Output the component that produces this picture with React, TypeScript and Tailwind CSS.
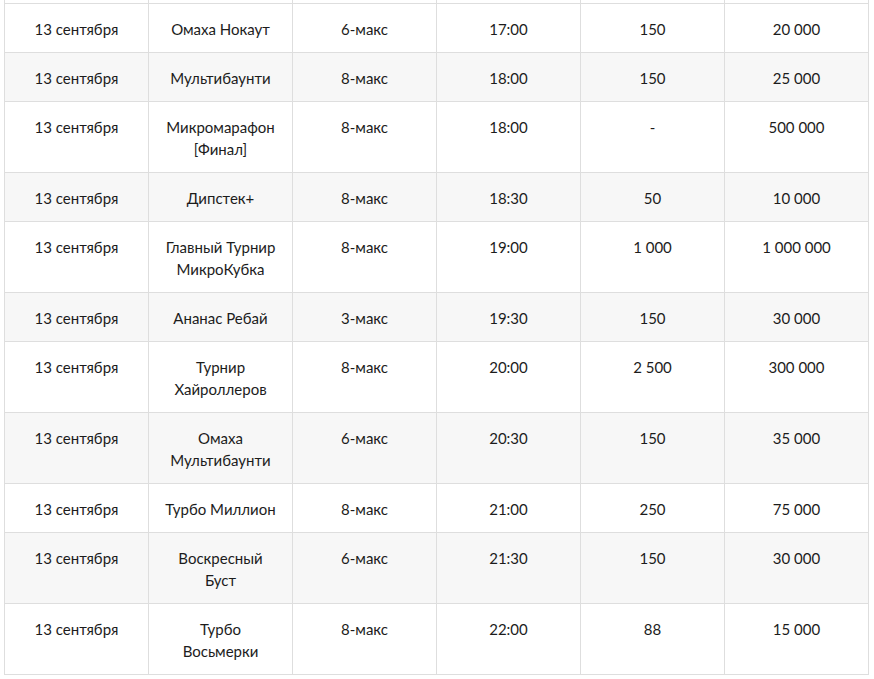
import React from "react";

type Row = { date: string; name: string[]; seats: string; time: string; buyin: string; prize: string };

const rows: Row[] = [
  { date: "13 сентября", name: ["Омаха Нокаут"], seats: "6-макс", time: "17:00", buyin: "150", prize: "20 000" },
  { date: "13 сентября", name: ["Мультибаунти"], seats: "8-макс", time: "18:00", buyin: "150", prize: "25 000" },
  { date: "13 сентября", name: ["Микромарафон", "[Финал]"], seats: "8-макс", time: "18:00", buyin: "-", prize: "500 000" },
  { date: "13 сентября", name: ["Дипстек+"], seats: "8-макс", time: "18:30", buyin: "50", prize: "10 000" },
  { date: "13 сентября", name: ["Главный Турнир", "МикроКубка"], seats: "8-макс", time: "19:00", buyin: "1 000", prize: "1 000 000" },
  { date: "13 сентября", name: ["Ананас Ребай"], seats: "3-макс", time: "19:30", buyin: "150", prize: "30 000" },
  { date: "13 сентября", name: ["Турнир", "Хайроллеров"], seats: "8-макс", time: "20:00", buyin: "2 500", prize: "300 000" },
  { date: "13 сентября", name: ["Омаха", "Мультибаунти"], seats: "6-макс", time: "20:30", buyin: "150", prize: "35 000" },
  { date: "13 сентября", name: ["Турбо Миллион"], seats: "8-макс", time: "21:00", buyin: "250", prize: "75 000" },
  { date: "13 сентября", name: ["Воскресный", "Буст"], seats: "6-макс", time: "21:30", buyin: "150", prize: "30 000" },
  { date: "13 сентября", name: ["Турбо", "Восьмерки"], seats: "8-макс", time: "22:00", buyin: "88", prize: "15 000" },
];

function Cell({ children, bg }: { children?: React.ReactNode; bg: string }) {
  return (
    <div className={`border-r border-b border-[#dedede] px-3 pt-[14px] pb-[12px] text-center leading-[22px] ${bg}`}>
      {children}
    </div>
  );
}

export default function App() {
  return (
    <div
      className="min-h-[679px] w-[874px] bg-white text-[15px] text-[#1c1c1c]"
      style={{ fontFamily: "Lato, 'Noto Sans', sans-serif" }}
    >
      <div className="ml-[4px] grid w-[865px] grid-cols-[repeat(6,144px)] border-l border-[#dedede]">
        {Array.from({ length: 6 }).map((_, i) => (
          <div key={`stub${i}`} className="h-[4px] border-r border-b border-[#dedede]" />
        ))}
        {rows.map((r, idx) => {
          const bg = idx % 2 === 1 ? "bg-[#f7f7f7]" : "bg-white";
          return (
            <React.Fragment key={idx}>
              <Cell bg={bg}>{r.date}</Cell>
              <Cell bg={bg}>
                {r.name.map((n, j) => (
                  <div key={j}>{n}</div>
                ))}
              </Cell>
              <Cell bg={bg}>{r.seats}</Cell>
              <Cell bg={bg}>{r.time}</Cell>
              <Cell bg={bg}>{r.buyin}</Cell>
              <Cell bg={bg}>{r.prize}</Cell>
            </React.Fragment>
          );
        })}
      </div>
    </div>
  );
}
